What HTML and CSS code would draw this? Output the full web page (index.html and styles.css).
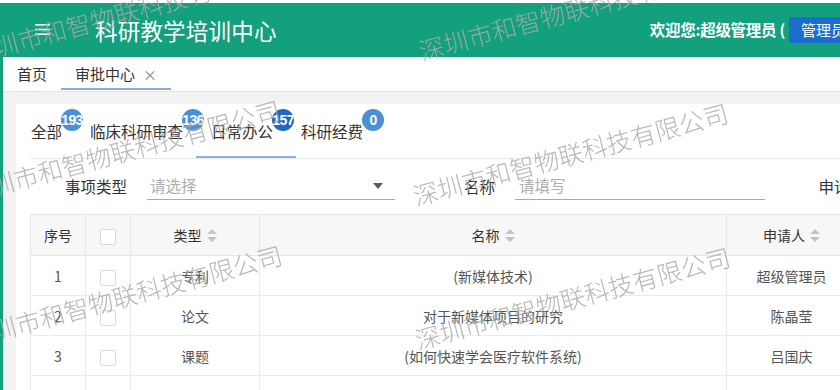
FILE: index.html
```html
<!DOCTYPE html>
<html lang="zh-CN">
<head>
<meta charset="utf-8">
<title>科研教学培训中心</title>
<link rel="stylesheet" href="styles.css">
</head>
<body>
<div class="page">
  <div class="topline"></div>
  <header class="header">
    <svg class="hamburger" width="15" height="11" viewBox="0 0 15 11" aria-hidden="true">
      <rect x="0" y="0" width="15" height="1.6" fill="#fff"/>
      <rect x="0" y="4.7" width="15" height="1.6" fill="#fff"/>
      <rect x="0" y="9.4" width="15" height="1.6" fill="#fff"/>
    </svg>
    <h1 class="title">科研教学培训中心</h1>
    <div class="spacer"></div>
    <span class="welcome">欢迎您:超级管理员 (</span>
    <span class="role-btn">管理员</span>
  </header>
  <div class="main">
    <div class="strip"></div>
    <div class="content">
      <nav class="tabbar">
        <span class="tab">首页</span>
        <span class="tab active">审批中心<span class="close">×</span></span>
      </nav>
      <div class="workspace">
        <section class="card">
          <div class="subtabs">
            <span class="subtab">全部<sup class="badge">193</sup></span>
            <span class="subtab">临床科研审查<sup class="badge">136</sup></span>
            <span class="subtab active">日常办公<sup class="badge dark">157</sup></span>
            <span class="subtab">科研经费<sup class="badge">0</sup></span>
          </div>
          <div class="filters">
            <div class="field">
              <span class="label">事项类型</span>
              <div class="control select"><span class="ph">请选择</span><span class="caret"></span></div>
            </div>
            <div class="field">
              <span class="label">名称</span>
              <div class="control"><span class="ph">请填写</span></div>
            </div>
            <div class="field">
              <span class="label">申请人</span>
              <div class="control"><span class="ph">请填写</span></div>
            </div>
          </div>
          <table class="grid">
            <colgroup>
              <col class="c-no"><col class="c-chk"><col class="c-type"><col class="c-name"><col class="c-user"><col class="c-time">
            </colgroup>
            <thead>
              <tr>
                <th>序号</th>
                <th><span class="chk"></span></th>
                <th>类型<svg class="sort" width="10" height="15" viewBox="0 0 10 15"><path d="M0 6 L5 1 L10 6 Z M0 9 L5 14 L10 9 Z" fill="#c0c4cc"/></svg></th>
                <th>名称<svg class="sort" width="10" height="15" viewBox="0 0 10 15"><path d="M0 6 L5 1 L10 6 Z M0 9 L5 14 L10 9 Z" fill="#c0c4cc"/></svg></th>
                <th>申请人<svg class="sort" width="10" height="15" viewBox="0 0 10 15"><path d="M0 6 L5 1 L10 6 Z M0 9 L5 14 L10 9 Z" fill="#c0c4cc"/></svg></th>
                <th>申请时间</th>
              </tr>
            </thead>
            <tbody>
              <tr><td>1</td><td><span class="chk"></span></td><td>专利</td><td>(新媒体技术)</td><td>超级管理员</td><td>2021-03-02</td></tr>
              <tr><td>2</td><td><span class="chk"></span></td><td>论文</td><td>对于新媒体项目的研究</td><td>陈晶莹</td><td>2021-03-01</td></tr>
              <tr><td>3</td><td><span class="chk"></span></td><td>课题</td><td>(如何快速学会医疗软件系统)</td><td>吕国庆</td><td>2021-02-26</td></tr>
              <tr><td>4</td><td><span class="chk"></span></td><td>专利</td><td>(智慧医疗)</td><td>超级管理员</td><td>2021-02-20</td></tr>
            </tbody>
          </table>
        </section>
      </div>
    </div>
  </div>
</div>
<div class="watermarks" aria-hidden="true">
  <span class="wm wm1">深圳市和智物联科技有限公司</span>
  <span class="wm wm2">深圳市和智物联科技有限公司</span>
  <span class="wm wm3">深圳市和智物联科技有限公司</span>
  <span class="wm wm4">深圳市和智物联科技有限公司</span>
  <span class="wm wm5">深圳市和智物联科技有限公司</span>
  <span class="wm wm6">深圳市和智物联科技有限公司</span>
</div>
</body>
</html>
```
FILE: styles.css
```css
html, body {
  margin: 0;
  padding: 0;
  overflow: hidden;
  background: #fff;
}
body {
  font-family: "Noto Sans CJK SC", "Liberation Sans", sans-serif;
  color: #333;
}
.page {
  width: 880px;
}
.topline {
  height: 3px;
  background: #fff;
}
.header {
  height: 54px;
  background: #13a07d;
  display: flex;
  align-items: center;
  padding: 0 22px 0 35px;
  color: #fff;
}
.hamburger {
  flex: none;
  margin-top: -2px;
}
.title {
  margin: 0 0 0 45px;
  font-size: 22.5px;
  font-weight: 400;
  line-height: 1;
  letter-spacing: 0.2px;
  white-space: nowrap;
}
.spacer {
  flex: 1;
}
.welcome {
  font-size: 15.5px;
  font-weight: 700;
  letter-spacing: -0.3px;
  white-space: nowrap;
  margin-right: 4px;
  margin-top: -3px;
}
.role-btn {
  background: #1c6dd0;
  color: #fff;
  font-size: 15px;
  height: 26px;
  line-height: 26px;
  padding: 0 12px;
  border-radius: 3px;
  white-space: nowrap;
}
.main {
  display: flex;
}
.strip {
  width: 3px;
  flex: none;
  background: #13a07d;
  min-height: 340px;
}
.content {
  flex: 1;
  min-width: 0;
}
.tabbar {
  height: 34px;
  border-bottom: 1px solid #e4e4e4;
  display: flex;
  background: #fff;
}
.tab {
  position: relative;
  padding: 0 14px;
  font-size: 15px;
  line-height: 34px;
  color: #333;
  white-space: nowrap;
}
.tab.active::after {
  content: "";
  position: absolute;
  left: 0;
  right: 0;
  bottom: 1px;
  height: 2px;
  background: #8eaadb;
}
.close {
  margin-left: 8px;
  color: #888;
  font-size: 14px;
}
.workspace {
  background: #f3f3f3;
  padding: 12px 0 0 13px;
}
.card {
  background: #fff;
  padding: 0 0 20px 14px;
  overflow: hidden;
}
.subtabs {
  height: 54px;
  border-bottom: 1px solid #e8e8e8;
  display: flex;
  padding-left: 1px;
}
.subtab {
  position: relative;
  font-size: 15.5px;
  line-height: 54px;
  color: #333;
  margin-right: 28px;
  white-space: nowrap;
}
.subtab.active::after {
  content: "";
  position: absolute;
  left: -15px;
  right: -23px;
  bottom: 0;
  height: 2px;
  background: #8fb0e0;
}
.badge {
  position: absolute;
  left: calc(100% - 1px);
  top: 5px;
  width: 22px;
  height: 22px;
  border-radius: 11px;
  background: #4a8fd8;
  color: #fff;
  font-family: "Liberation Sans", sans-serif;
  font-size: 14px;
  font-weight: 700;
  line-height: 22px;
  text-align: center;
  letter-spacing: -0.6px;
  display: flex;
  justify-content: center;
  white-space: nowrap;
}
.badge.dark {
  background: #2067c4;
}
.filters {
  display: flex;
  margin-top: 13px;
  padding-left: 17px;
}
.field {
  display: flex;
  flex: none;
  margin-right: 20px;
}
.label {
  width: 100px;
  box-sizing: border-box;
  padding-right: 20px;
  text-align: right;
  font-size: 15.5px;
  line-height: 28px;
  color: #333;
  white-space: nowrap;
}
.control {
  position: relative;
  width: 250px;
  height: 28px;
  box-sizing: border-box;
  border-bottom: 1px solid #aaa;
  padding-left: 4px;
}
.control.select {
  width: 248px;
  padding-left: 3px;
}
.ph {
  font-size: 15.5px;
  line-height: 27px;
  color: #adadad;
}
.caret {
  position: absolute;
  right: 12px;
  top: 11px;
  width: 0;
  height: 0;
  border-left: 5.5px solid transparent;
  border-right: 5.5px solid transparent;
  border-top: 6px solid #5a5a5a;
}
.grid {
  margin-top: 14px;
  border-collapse: collapse;
  table-layout: fixed;
  width: 976px;
  border: 1px solid #e6e6e6;
  font-size: 14px;
}
.c-no { width: 55px; }
.c-chk { width: 45px; }
.c-type { width: 129px; }
.c-name { width: 467px; }
.c-user { width: 130px; }
.c-time { width: 150px; }
.grid th {
  height: 40px;
  background: #f7f7f7;
  font-weight: 400;
  color: #333;
  border: 1px solid #e6e6e6;
  padding: 0;
  white-space: nowrap;
}
.grid td {
  height: 39px;
  color: #555;
  text-align: center;
  border-top: 1px solid #ebebeb;
  border-left: 1px solid #ebebeb;
  border-right: 1px solid #ebebeb;
  padding: 0;
  white-space: nowrap;
}
.sort {
  vertical-align: -2px;
  margin-left: 5px;
}
.chk {
  display: inline-block;
  width: 14px;
  height: 14px;
  border: 1px solid #d9d9d9;
  border-radius: 2px;
  background: #fff;
  vertical-align: middle;
}
.watermarks {
  position: fixed;
  inset: 0;
  pointer-events: none;
  z-index: 10;
  overflow: hidden;
}
.wm {
  position: absolute;
  font-family: "Noto Sans CJK SC", sans-serif;
  font-size: 25px;
  font-weight: 300;
  line-height: 25px;
  color: rgba(170, 170, 170, 0.85);
  white-space: nowrap;
  transform-origin: 12.5px 12.5px;
  transform: rotate(-15deg);
}
.wm1 { left: -31px; top: 38px; }
.wm2 { left: 419px; top: 35px; }
.wm3 { left: -35px; top: 177px; }
.wm4 { left: 413px; top: 180px; }
.wm5 { left: -33px; top: 322px; }
.wm6 { left: 415px; top: 324px; }
```
